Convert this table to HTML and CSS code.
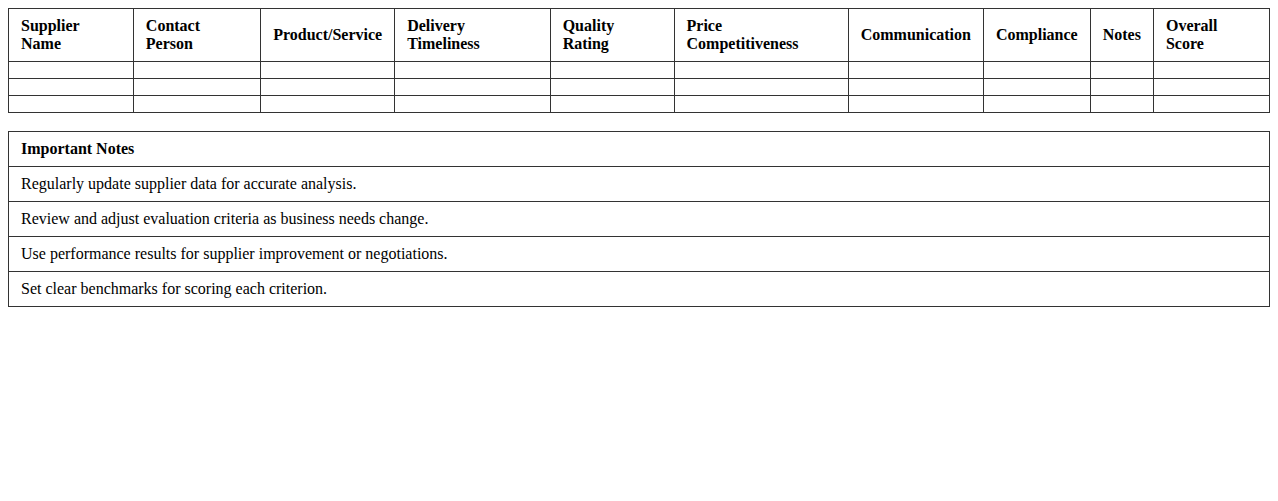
FILE: index.html
```html
<!DOCTYPE html>
<html lang="en">
<head>
<meta charset="utf-8">
<title>Supplier Evaluation</title>
<link rel="stylesheet" href="styles.css">
</head>
<body>
<table class="grid">
  <thead>
    <tr>
      <th>Supplier Name</th>
      <th>Contact Person</th>
      <th>Product/Service</th>
      <th>Delivery Timeliness</th>
      <th>Quality Rating</th>
      <th>Price Competitiveness</th>
      <th>Communication</th>
      <th>Compliance</th>
      <th>Notes</th>
      <th>Overall Score</th>
    </tr>
  </thead>
  <tbody>
    <tr><td></td><td></td><td></td><td></td><td></td><td></td><td></td><td></td><td></td><td></td></tr>
    <tr><td></td><td></td><td></td><td></td><td></td><td></td><td></td><td></td><td></td><td></td></tr>
    <tr><td></td><td></td><td></td><td></td><td></td><td></td><td></td><td></td><td></td><td></td></tr>
  </tbody>
</table>
<table class="grid notes">
  <thead>
    <tr><th>Important Notes</th></tr>
  </thead>
  <tbody>
    <tr><td>Regularly update supplier data for accurate analysis.</td></tr>
    <tr><td>Review and adjust evaluation criteria as business needs change.</td></tr>
    <tr><td>Use performance results for supplier improvement or negotiations.</td></tr>
    <tr><td>Set clear benchmarks for scoring each criterion.</td></tr>
  </tbody>
</table>
</body>
</html>
```
FILE: styles.css
```css
body {
  margin: 8px;
  font-family: "Liberation Serif", "Times New Roman", serif;
  font-size: 16px;
  color: #000;
  background: #fff;
}
.grid {
  width: 100%;
  border-collapse: collapse;
  margin-bottom: 18px;
}
.grid th,
.grid td {
  border: 1px solid #333;
  padding: 8px 12px;
  text-align: left;
}
.grid th {
  font-weight: bold;
}
```
